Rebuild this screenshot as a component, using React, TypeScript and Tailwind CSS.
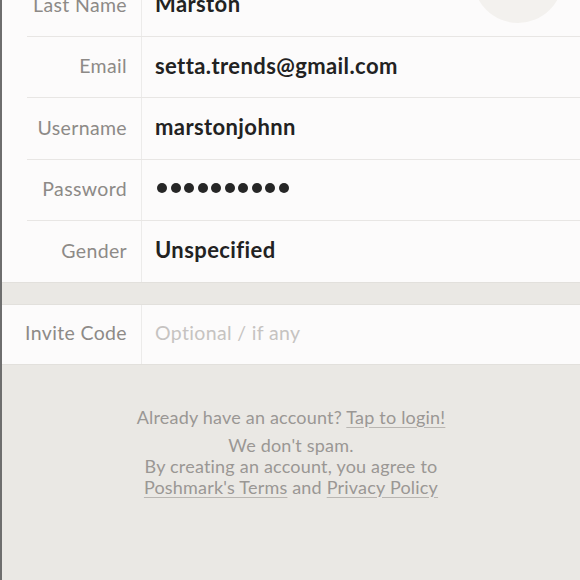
import React from "react";

const rows = [
  { label: "Last Name", value: "Marston" },
  { label: "Email", value: "setta.trends@gmail.com" },
  { label: "Username", value: "marstonjohnn" },
  { label: "Password", value: "password" },
  { label: "Gender", value: "Unspecified" },
];

const PasswordDots = () => (
  <div className="flex items-center gap-[3.5px] pl-[2px]">
    {Array.from({ length: 10 }).map((_, i) => (
      <span key={i} className="h-[10px] w-[10px] rounded-full bg-[#262626]" />
    ))}
  </div>
);

const Row = ({ label, value }: { label: string; value: string }) => (
  <div className="flex h-[60.5px]">
    <div className="flex w-[139px] shrink-0 items-center justify-end pb-[2px] pr-[14px] text-[19.5px] tracking-[0.35px] text-[#8d8a87]">
      {label}
    </div>
    <div className="w-px bg-[#ecebea]" />
    <div className="flex flex-1 items-center pb-[3px] pl-[13px] text-[22px] font-bold tracking-[0.4px] text-[#222]">
      {value === "password" ? <PasswordDots /> : value}
    </div>
  </div>
);

const App = () => {
  return (
    <div
      className="relative h-[580px] w-[580px] overflow-hidden border-l-2 border-[#6e6e6e] bg-[#eae8e4]"
      style={{ fontFamily: "Lato, 'Open Sans', sans-serif" }}
    >
      {/* avatar placeholder */}
      <div className="absolute left-[471px] top-[-67px] h-[90px] w-[90px] rounded-full bg-[#f3f1ee]" />

      {/* main form */}
      <div className="-mt-[25px] bg-[#fcfbfb]">
        {rows.map((row, i) => (
          <div key={row.label}>
            {i > 0 && <div className="ml-[25px] h-px bg-[#e8e6e4]" />}
            <Row label={row.label} value={row.value} />
          </div>
        ))}
      </div>

      {/* spacer */}
      <div className="h-[22px] border-t border-[#e2e0dc]" />

      {/* invite code */}
      <div className="flex h-[61px] border-y border-[#e2e0dc] bg-[#fcfbfb]">
        <div className="flex w-[139px] shrink-0 items-center justify-end pb-[2px] pr-[14px] text-[19.5px] tracking-[0.35px] text-[#8d8a87]">
          Invite Code
        </div>
        <div className="w-px bg-[#ecebea]" />
        <div className="flex flex-1 items-center pb-[2px] pl-[13px] text-[19.5px] tracking-[0.35px] text-[#c6c3c1]">
          Optional / if any
        </div>
      </div>

      {/* footer */}
      <div className="pt-[42px] text-center text-[18px] leading-[21px] tracking-[0.2px] text-[#9a9794]">
        <p>
          Already have an account?{" "}
          <span className="underline decoration-[#b9b6b2] underline-offset-[3px]">Tap to login!</span>
        </p>
        <p className="mt-[7px]">We don't spam.</p>
        <p>By creating an account, you agree to</p>
        <p>
          <span className="underline decoration-[#b9b6b2] underline-offset-[3px]">Poshmark's Terms</span> and{" "}
          <span className="underline decoration-[#b9b6b2] underline-offset-[3px]">Privacy Policy</span>
        </p>
      </div>
    </div>
  );
};

export default App;
